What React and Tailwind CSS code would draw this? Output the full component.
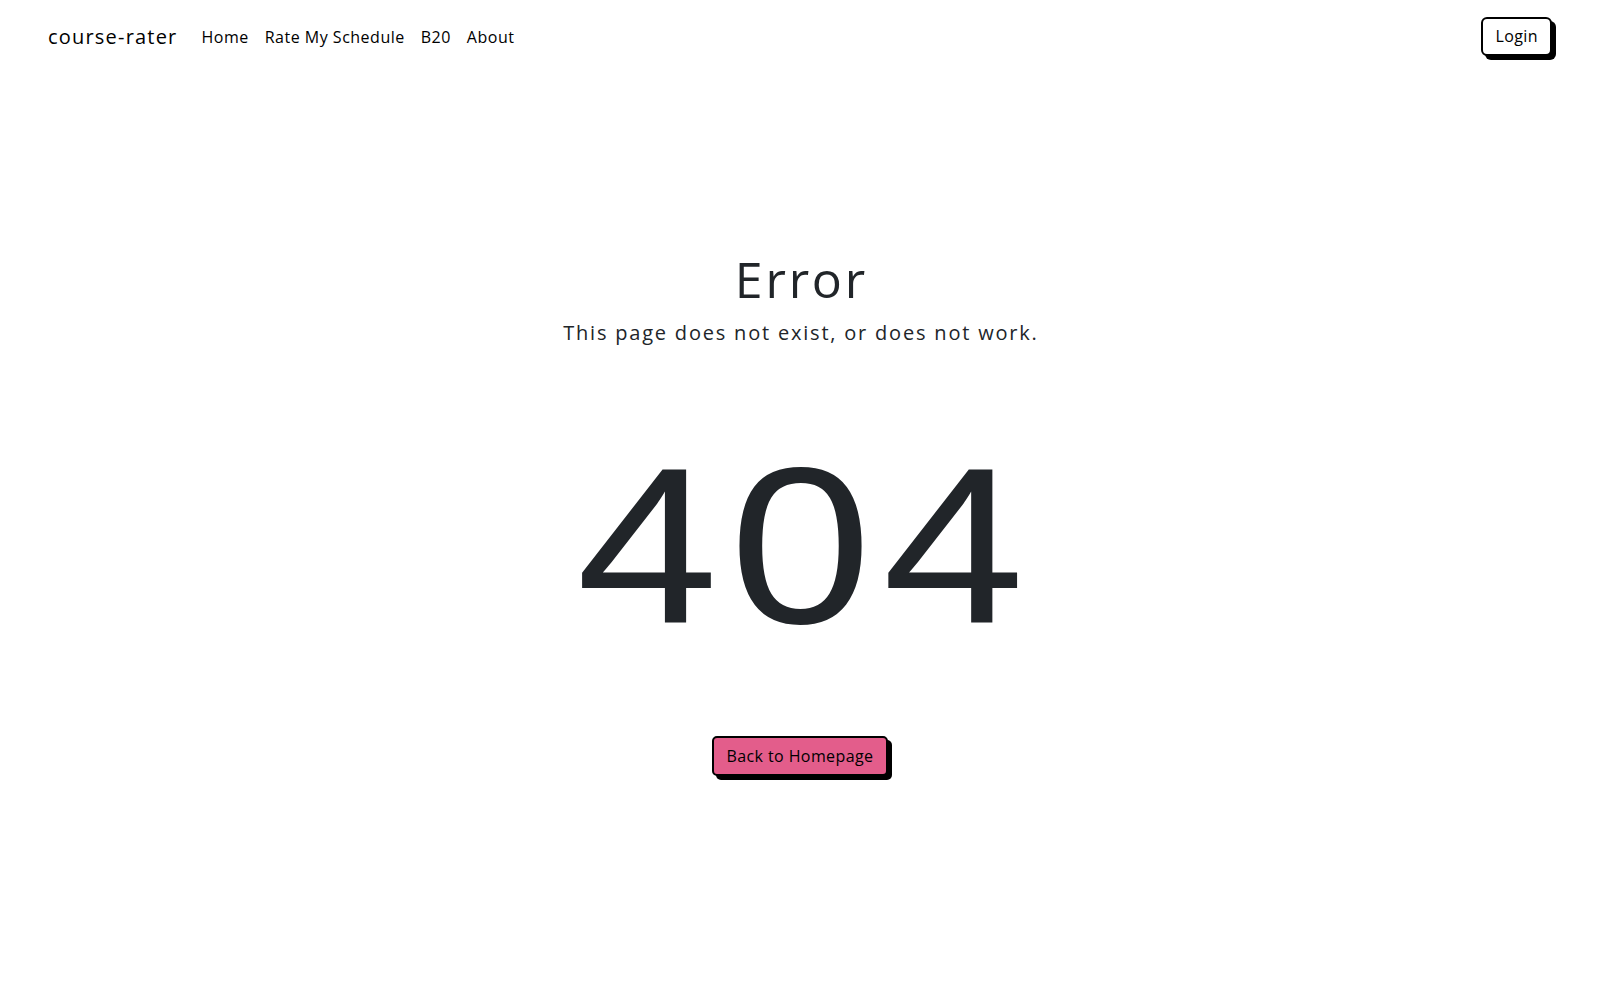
export default function App() {
  const sans = { fontFamily: '"Open Sans", "Noto Sans", sans-serif' };
  return (
    <div className="min-h-screen bg-white text-[#212529]" style={sans}>
      <nav className="flex items-center justify-between px-12 h-[72px]">
        <div className="flex items-center pt-[2px]">
          <a className="text-[20px] text-black mr-[16px] tracking-[1.2px]">course-rater</a>
          <div className="flex items-center text-[16px] text-black tracking-[0.5px]">
            <a className="px-2">Home</a>
            <a className="px-2">Rate My Schedule</a>
            <a className="px-2">B20</a>
            <a className="px-2">About</a>
          </div>
        </div>
        <button className="h-[39px] px-[12px] border-2 border-black rounded-[6px] bg-white text-black text-[16px] tracking-[0.4px] shadow-[4px_4px_0_#000]">
          Login
        </button>
      </nav>
      <main className="flex flex-col items-center">
        <h1 className="mt-[177px] text-[50px] leading-[60px] font-normal tracking-[2.8px] pl-[2.8px]">Error</h1>
        <p className="mt-[9px] text-[20px] leading-[30px] tracking-[1.8px] pl-[1.8px]">This page does not exist, or does not work.</p>
        <div
          className="mt-[87px] text-[222px] leading-[222px] tracking-[9.6px] pl-[9.6px] scale-x-[1.15] text-[#212529]"
          style={{ fontFamily: '"Liberation Sans", Arial, sans-serif' }}
        >
          404
        </div>
        <button className="mt-[79px] h-[40px] px-[13px] border-2 border-black rounded-[5px] bg-[#e35d8b] text-black text-[16px] tracking-[0.4px] shadow-[4px_4px_0_#000]">
          Back to Homepage
        </button>
      </main>
    </div>
  );
}
